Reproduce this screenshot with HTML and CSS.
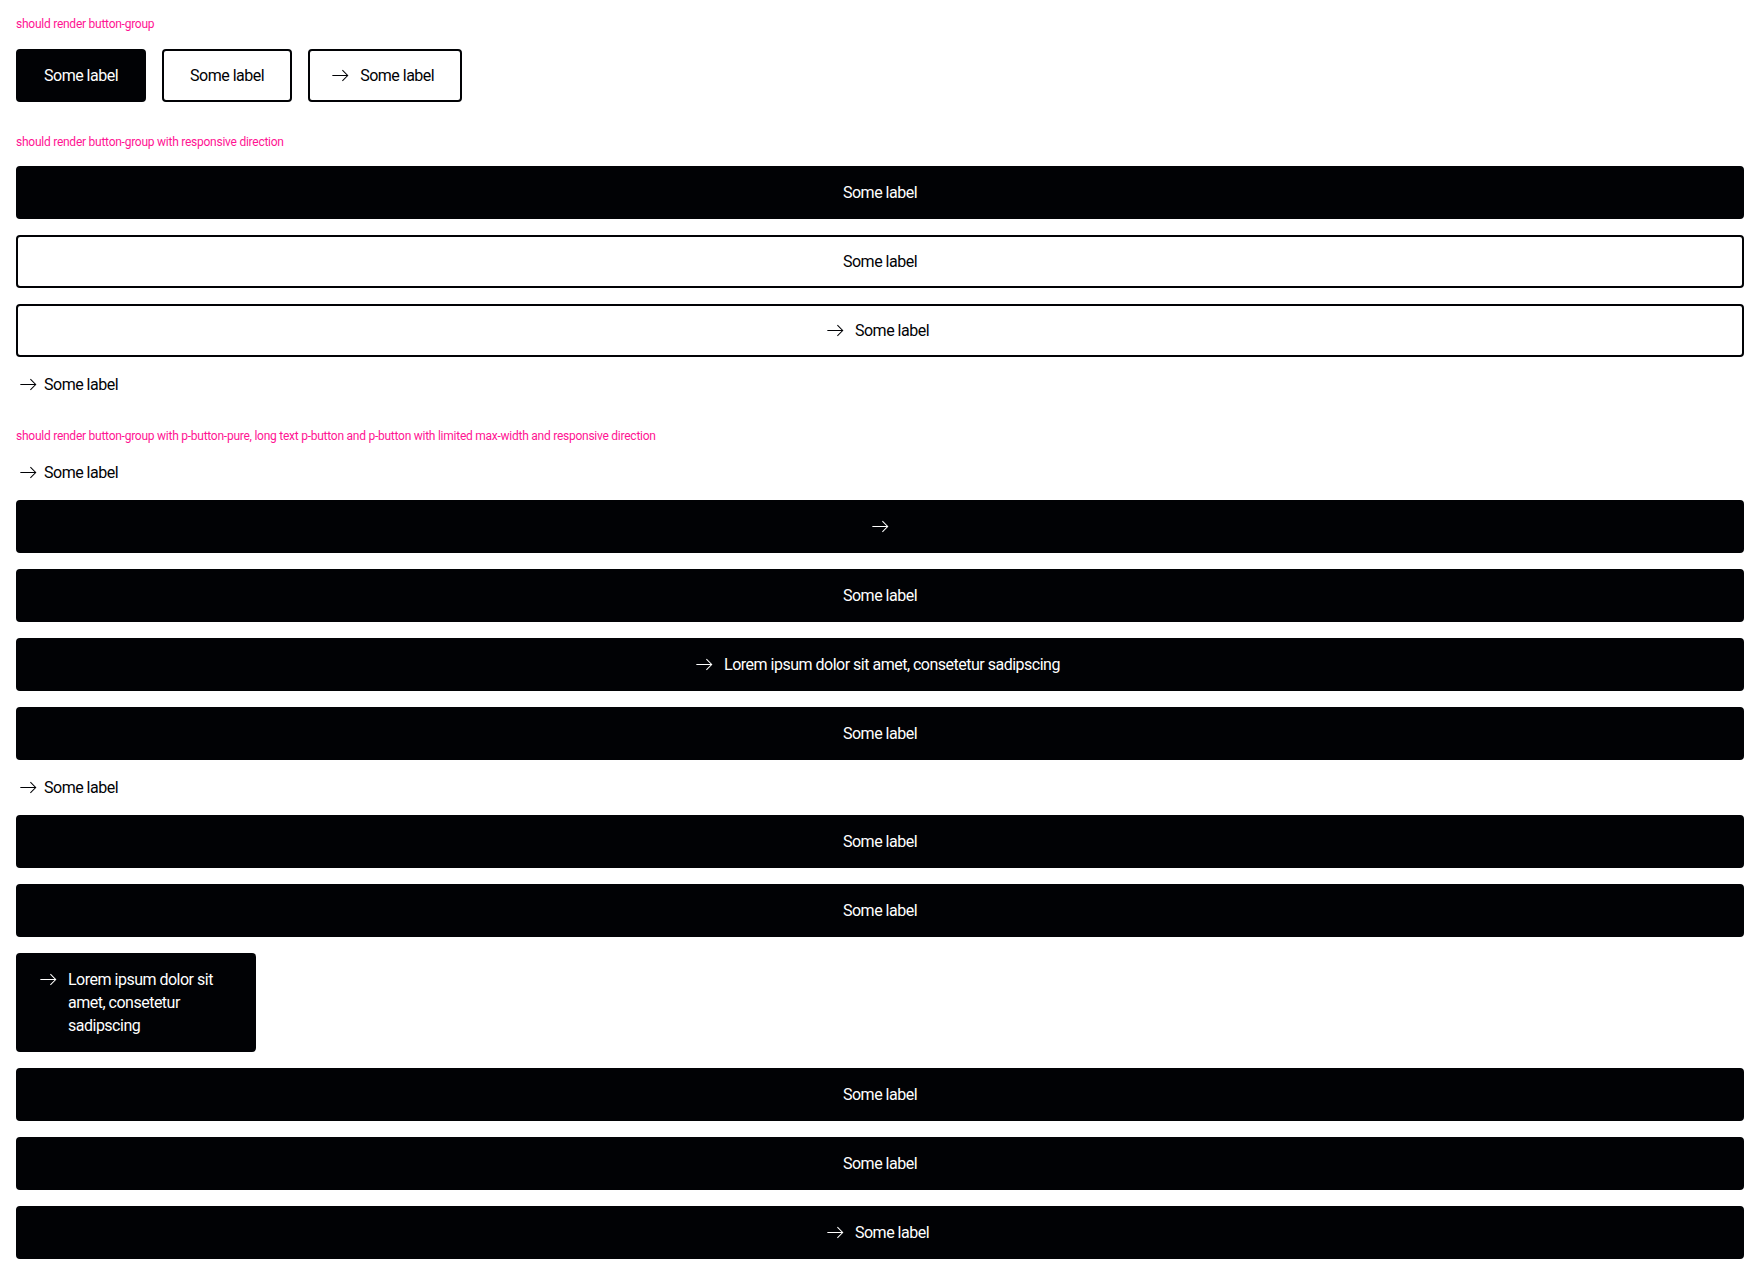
FILE: index.html
```html
<!DOCTYPE html>
<html lang="en">
<head>
<meta charset="utf-8">
<title>Button group</title>
<link rel="stylesheet" href="styles.css">
</head>
<body>
<svg width="0" height="0" class="defs" aria-hidden="true">
  <symbol id="arrow" viewBox="0 0 24 24">
    <path d="M4 12h16M14.5 6.5 20 12l-5.5 5.5" fill="none" stroke="currentColor" stroke-width="1.1"/>
  </symbol>
</svg>

<section class="section">
  <p class="title">should render button-group</p>
  <div class="group group-row">
    <button class="btn primary"><span>Some label</span></button>
    <button class="btn secondary"><span>Some label</span></button>
    <button class="btn secondary with-icon"><svg class="icon"><use href="#arrow"/></svg><span>Some label</span></button>
  </div>
</section>

<section class="section">
  <p class="title">should render button-group with responsive direction</p>
  <div class="group">
    <button class="btn primary"><span>Some label</span></button>
    <button class="btn secondary"><span>Some label</span></button>
    <button class="btn secondary with-icon"><svg class="icon"><use href="#arrow"/></svg><span>Some label</span></button>
    <button class="pure"><svg class="icon"><use href="#arrow"/></svg><span>Some label</span></button>
  </div>
</section>

<section class="section">
  <p class="title">should render button-group with p-button-pure, long text p-button and p-button with limited max-width and responsive direction</p>
  <div class="group">
    <button class="pure"><svg class="icon"><use href="#arrow"/></svg><span>Some label</span></button>
    <button class="btn primary icon-only" aria-label="Some label"><svg class="icon"><use href="#arrow"/></svg></button>
    <button class="btn primary"><span>Some label</span></button>
    <button class="btn primary with-icon"><svg class="icon"><use href="#arrow"/></svg><span>Lorem ipsum dolor sit amet, consetetur sadipscing</span></button>
    <button class="btn primary"><span>Some label</span></button>
    <button class="pure"><svg class="icon"><use href="#arrow"/></svg><span>Some label</span></button>
    <button class="btn primary"><span>Some label</span></button>
    <button class="btn primary"><span>Some label</span></button>
    <button class="btn primary with-icon limited"><svg class="icon"><use href="#arrow"/></svg><span>Lorem ipsum dolor sit amet, consetetur sadipscing</span></button>
    <button class="btn primary"><span>Some label</span></button>
    <button class="btn primary"><span>Some label</span></button>
    <button class="btn primary with-icon"><svg class="icon"><use href="#arrow"/></svg><span>Some label</span></button>
  </div>
</section>
</body>
</html>
```

FILE: styles.css
```css
html, body {
  margin: 0;
  background: #ffffff;
}

body {
  padding: 16px;
  font-family: Roboto, "Liberation Sans", Arial, sans-serif;
  color: #010205;
}

.defs {
  position: absolute;
  width: 0;
  height: 0;
  overflow: hidden;
}

.section + .section {
  margin-top: 32px;
}

.title {
  margin: 0 0 16px;
  font-size: 12px;
  line-height: 16.6px;
  letter-spacing: -0.25px;
  color: #ff1493;
}

.group {
  display: flex;
  flex-direction: column;
  gap: 16px;
}

.group-row {
  flex-direction: row;
  align-items: flex-start;
}

.btn {
  display: flex;
  align-items: flex-start;
  justify-content: center;
  gap: 8px;
  box-sizing: border-box;
  margin: 0;
  padding: 13px 26px;
  border: 2px solid #010205;
  border-radius: 4px;
  font-family: inherit;
  font-size: 16px;
  line-height: 23px;
  letter-spacing: -0.5px;
  font-weight: 400;
  text-align: left;
  cursor: pointer;
}

.primary {
  background: #010205;
  color: #ffffff;
}

.secondary {
  background: #ffffff;
  color: #010205;
}

.with-icon {
  padding-left: 18px;
}

.icon-only {
  padding: 13px;
}

.limited {
  max-width: 240px;
  justify-content: flex-start;
}

.icon {
  display: block;
  flex: 0 0 auto;
  width: 24px;
  height: 23px;
}

.pure {
  display: flex;
  align-items: flex-start;
  align-self: flex-start;
  gap: 4px;
  margin: 0;
  padding: 0;
  border: 0;
  background: transparent;
  color: #010205;
  font-family: inherit;
  font-size: 16px;
  line-height: 23px;
  letter-spacing: -0.5px;
  cursor: pointer;
}
```
